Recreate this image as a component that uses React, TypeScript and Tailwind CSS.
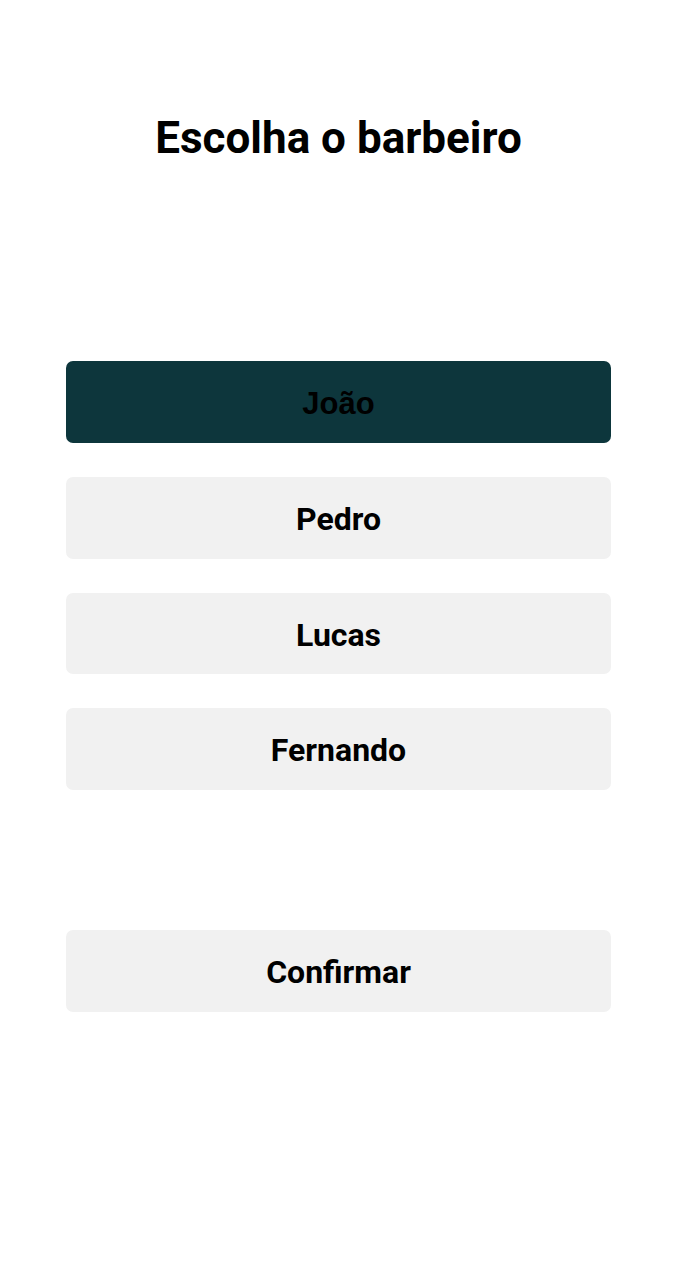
const barbeiros = ['João', 'Pedro', 'Lucas', 'Fernando'];

export default function App() {
  const selected = 'João';

  return (
    <div className="min-h-[1280px] bg-white px-[66px] font-['Roboto',sans-serif] text-black">
      {/* Title */}
      <h1 className="pt-[113px] text-center text-[44px] leading-[50px] font-bold">
        Escolha o barbeiro
      </h1>

      {/* Barber list */}
      <div className="mt-[198px] flex flex-col gap-[34px]">
        {barbeiros.map((nome) => {
          const active = nome === selected;
          return (
            <button
              key={nome}
              className={
                active
                  ? "flex h-[82px] w-full items-center justify-center rounded-[7px] bg-[#0d363c] pt-[4px] font-['Liberation_Sans',sans-serif] text-[31px] font-bold text-black"
                  : 'flex h-[81.5px] w-full items-center justify-center rounded-[7px] bg-[#f1f1f1] pt-[3px] text-[32px] font-bold text-black'
              }
            >
              {nome}
            </button>
          );
        })}
      </div>

      {/* Confirm */}
      <button className="mt-[140.5px] flex h-[81.5px] w-full items-center justify-center rounded-[7px] bg-[#f1f1f1] pt-[3px] text-[32px] font-bold text-black">
        Confirmar
      </button>
    </div>
  );
}
